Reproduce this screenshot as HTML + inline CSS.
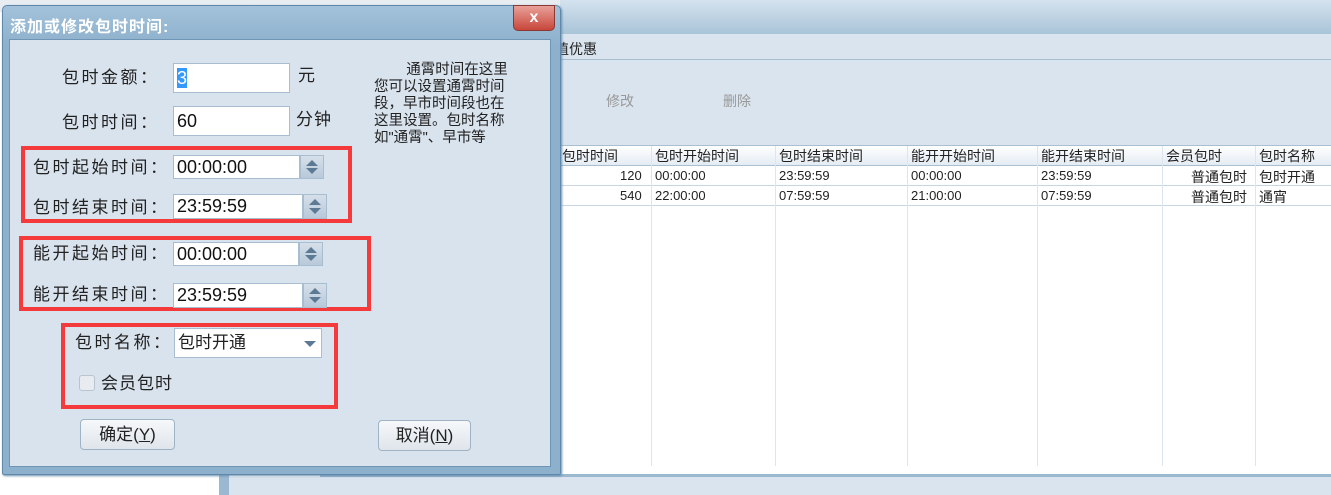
<!DOCTYPE html>
<html><head><meta charset="utf-8"><style>
*{margin:0;padding:0;box-sizing:border-box}
body{width:1331px;height:495px;overflow:hidden;position:relative;background:#fff;font-family:"Liberation Sans","Noto Sans CJK SC",sans-serif;color:#222}
.a{position:absolute}
.lbl{position:absolute;font-size:17px;letter-spacing:2.5px;color:#222;line-height:20px}
.inp{position:absolute;background:#fff;border:1px solid #a9bdd0;font-size:18px;padding-left:3px;line-height:36px;color:#111}
.spin{position:absolute;width:24px;background:linear-gradient(#d6e0ea,#b8c9da);border:1px solid #a9bdd0}
.spin:before{content:"";position:absolute;left:5px;top:4px;border:6px solid transparent;border-bottom:6px solid #5d7a95;border-top:0}
.spin:after{content:"";position:absolute;left:5px;bottom:4px;border:6px solid transparent;border-top:6px solid #5d7a95;border-bottom:0}
.red{position:absolute;border:4px solid #f43a3a}
.th{position:absolute;top:146px;font-size:14px;color:#222}
.td{position:absolute;font-size:13px;color:#222}
.vl{position:absolute;top:146px;width:1px;height:320px;background:#dde6ef}
.btn{position:absolute;border:1px solid #9fb3c6;border-radius:4px;background:linear-gradient(#f6f8fa,#dfe5eb);font-size:17px;text-align:center;line-height:29px;color:#222}
</style></head><body>
<div class="a" style="left:0;top:0;width:1331px;height:12px;background:#e8edf2"></div>
<div class="a" style="left:560px;top:0;width:771px;height:34px;background:linear-gradient(#d4e2ee,#a9c4d8)"></div>
<div class="a" style="left:540px;top:34px;width:791px;height:26px;background:#dae4ee;border-bottom:1px solid #a9bfd2"></div>
<div class="a" style="left:555px;top:39px;font-size:14px">值优惠</div>
<div class="a" style="left:540px;top:60px;width:791px;height:86px;background:#dae4ee"></div>
<div class="a" style="left:606px;top:91px;font-size:14px;color:#999">修改</div>
<div class="a" style="left:723px;top:91px;font-size:14px;color:#999">删除</div>
<div class="a" style="left:540px;top:145px;width:791px;height:21px;background:linear-gradient(#fff,#e4ecf3);border-top:1px solid #a9bfd2;border-bottom:1px solid #a9bfd2"></div>
<div class="a" style="left:540px;top:166px;width:791px;height:300px;background:#fff"></div>
<div class="a" style="left:540px;top:185px;width:791px;height:1px;background:#c8d6e3"></div>
<div class="a" style="left:540px;top:205px;width:791px;height:1px;background:#c8d6e3"></div>
<div class="vl" style="left:651px"></div><div class="vl" style="left:775px"></div><div class="vl" style="left:907px"></div><div class="vl" style="left:1037px"></div><div class="vl" style="left:1162px"></div><div class="vl" style="left:1255px"></div>
<div class="th" style="left:562px">包时时间</div><div class="th" style="left:655px">包时开始时间</div><div class="th" style="left:779px">包时结束时间</div><div class="th" style="left:911px">能开开始时间</div><div class="th" style="left:1041px">能开结束时间</div><div class="th" style="left:1166px">会员包时</div><div class="th" style="left:1259px">包时名称</div>
<div class="td" style="left:620px;top:168px">120</div><div class="td" style="left:655px;top:168px">00:00:00</div><div class="td" style="left:779px;top:168px">23:59:59</div><div class="td" style="left:911px;top:168px">00:00:00</div><div class="td" style="left:1041px;top:168px">23:59:59</div><div class="td" style="left:1191px;top:167px;font-size:14px">普通包时</div><div class="td" style="left:1259px;top:167px;font-size:14px">包时开通</div>
<div class="td" style="left:620px;top:188px">540</div><div class="td" style="left:655px;top:188px">22:00:00</div><div class="td" style="left:779px;top:188px">07:59:59</div><div class="td" style="left:911px;top:188px">21:00:00</div><div class="td" style="left:1041px;top:188px">07:59:59</div><div class="td" style="left:1191px;top:187px;font-size:14px">普通包时</div><div class="td" style="left:1259px;top:187px;font-size:14px">通宵</div>
<div class="a" style="left:320px;top:474px;width:1011px;height:3px;background:#9ab8d0"></div>
<div class="a" style="left:219px;top:474px;width:10px;height:21px;background:#9ab8d0"></div>
<div class="a" style="left:229px;top:477px;width:1102px;height:18px;background:#dae4ee"></div>
<!-- dialog -->
<div class="a" style="left:2px;top:5px;width:559px;height:470px;background:linear-gradient(#a3c2da,#8db0cc 40px,#8db0cc);border:1px solid #5f88ab;border-radius:5px 5px 2px 2px;box-shadow:1px 1px 2px #6a8fb0"></div>
<div class="a" style="left:10px;top:13px;font-size:16px;font-weight:bold;color:#fff;letter-spacing:1px">添加或修改包时时间:</div>
<div class="a" style="left:513px;top:5px;width:42px;height:26px;background:linear-gradient(#e9a199,#c8463a);border:1px solid #8a3a32;border-radius:0 0 5px 5px;color:#fff;font-weight:bold;font-size:16px;text-align:center;line-height:24px">x</div>
<div class="a" style="left:9px;top:39px;width:542px;height:428px;background:#d9e3ed;border:1px solid #6f95b6"></div>
<div class="lbl" style="left:62px;top:68px">包时金额：</div>
<div class="inp" style="left:173px;top:63px;width:117px;height:30px;line-height:28px"><span style="background:#3399ff;color:#fff">3</span></div>
<div class="lbl" style="left:298px;top:66px">元</div>
<div class="lbl" style="left:62px;top:113px">包时时间：</div>
<div class="inp" style="left:173px;top:106px;width:117px;height:30px;line-height:28px">60</div>
<div class="lbl" style="left:296px;top:110px;letter-spacing:1px">分钟</div>
<div class="a" style="left:374px;top:62px;width:150px;font-size:14.5px;line-height:17px;color:#222;white-space:nowrap">&nbsp;&nbsp;&nbsp;&nbsp;&nbsp;&nbsp;&nbsp;&nbsp;通霄时间在这里<br>您可以设置通霄时间<br>段，早市时间段也在<br>这里设置。包时名称<br>如"通霄"、早市等</div>
<div class="red" style="left:21px;top:146px;width:331px;height:77px"></div>
<div class="lbl" style="left:33px;top:158px">包时起始时间：</div>
<div class="inp" style="left:173px;top:155px;width:127px;height:24px;line-height:22px">00:00:00</div><div class="spin" style="left:300px;top:155px;height:24px"></div>
<div class="lbl" style="left:33px;top:198px">包时结束时间：</div>
<div class="inp" style="left:173px;top:194px;width:130px;height:25px;line-height:23px">23:59:59</div><div class="spin" style="left:303px;top:194px;height:25px"></div>
<div class="red" style="left:19px;top:236px;width:352px;height:75px"></div>
<div class="lbl" style="left:33px;top:244px">能开起始时间：</div>
<div class="inp" style="left:173px;top:242px;width:126px;height:24px;line-height:22px">00:00:00</div><div class="spin" style="left:299px;top:242px;height:24px"></div>
<div class="lbl" style="left:33px;top:285px">能开结束时间：</div>
<div class="inp" style="left:173px;top:283px;width:130px;height:25px;line-height:23px">23:59:59</div><div class="spin" style="left:303px;top:283px;height:25px"></div>
<div class="red" style="left:61px;top:323px;width:277px;height:86px"></div>
<div class="lbl" style="left:75px;top:333px">包时名称：</div>
<div class="a" style="left:174px;top:328px;width:148px;height:30px;background:#fff;border:1px solid #a9bdd0;font-size:17px;line-height:28px;padding-left:3px">包时开通</div>
<div class="a" style="left:304px;top:341px;border:6px solid transparent;border-top:6px solid #5d7a95"></div>
<div class="a" style="left:79px;top:375px;width:16px;height:16px;border:1px solid #b8c4d0;border-radius:3px;background:#e8ecf0"></div>
<div class="lbl" style="left:101px;top:374px;letter-spacing:1px">会员包时</div>
<div class="btn" style="left:80px;top:419px;width:95px;height:31px">确定(<u>Y</u>)</div>
<div class="btn" style="left:378px;top:420px;width:93px;height:31px">取消(<u>N</u>)</div>
</body></html>
